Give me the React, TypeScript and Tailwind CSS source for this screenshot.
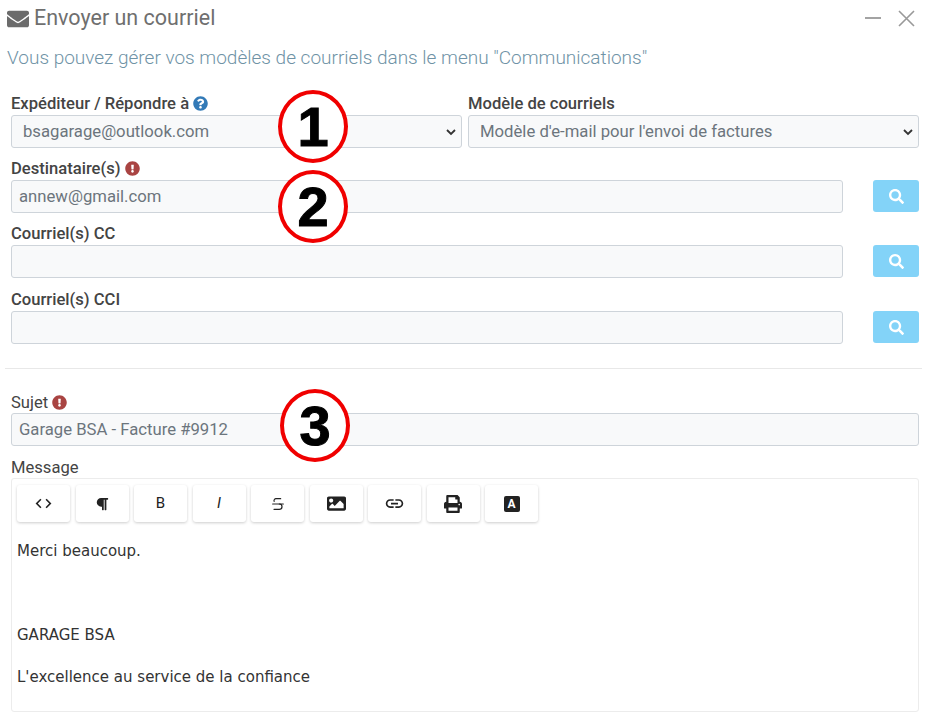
import React from "react";
import { FaEnvelope, FaQuestionCircle, FaExclamationCircle, FaSearch, FaParagraph, FaImage, FaPrint } from "react-icons/fa";
import { MdCode, MdLink } from "react-icons/md";
import { Strikethrough } from "lucide-react";

const inputCls = "block w-full h-[33px] border border-[#ced4da] rounded-[3px] bg-[#f8f9fa] px-[7px] text-[16.7px] text-[#6c757d] outline-none";

function Search() {
  return (
    <button className="w-[46px] h-[32px] rounded-[3px] bg-[#83d3f8] flex items-center justify-center text-white shrink-0">
      <FaSearch className="text-[15px]" />
    </button>
  );
}

function Label({ children, regular }: { children: React.ReactNode; regular?: boolean }) {
  return (
    <div className={"h-[19px] leading-[19px] text-[16.6px] text-[#444] flex items-center gap-[4px] " + (regular ? "font-normal" : "font-medium")}>
      {children}
    </div>
  );
}

function Select({ value }: { value: string }) {
  return (
    <div className="relative">
      <select className={inputCls + " appearance-none pl-[11px]"}>
        <option>{value}</option>
      </select>
      <svg width="10" height="7" viewBox="0 0 10 7" fill="none" stroke="#333" strokeWidth="1.8" className="absolute right-[6px] top-[14px]">
        <path d="M1 1L5 5L9 1" />
      </svg>
    </div>
  );
}

function InputRow({ label, value, icon, gapClass }: { label: string; value: string; icon?: boolean; gapClass: string }) {
  return (
    <div className={gapClass}>
      <div className="pb-[2px]">
        <Label>
          {label}
          {icon && <FaExclamationCircle className="text-[#a94442] text-[15px]" />}
        </Label>
      </div>
      <div className="flex gap-[30px]">
        <input readOnly value={value} className={inputCls + " flex-1 min-w-0"} />
        <Search />
      </div>
    </div>
  );
}

function Mark({ n, className }: { n: string; className: string }) {
  return (
    <div
      className={"absolute w-[70px] h-[73px] rounded-[50%] border-[4px] border-[#f00000] bg-white flex items-center justify-center text-black text-[56px] font-bold [-webkit-text-stroke:1px_black] " + className}
      style={{ fontFamily: '"Liberation Sans", sans-serif' }}
    >
      {n}
    </div>
  );
}

function TB({ children }: { children: React.ReactNode }) {
  return (
    <div className="w-[53px] h-[37px] bg-white rounded-[3px] shadow-[0_1px_3px_rgba(0,0,0,0.2)] flex items-center justify-center text-[#222]">
      {children}
    </div>
  );
}

export default function App() {
  return (
    <div className="relative w-[927px] h-[717px] overflow-hidden bg-white" style={{ fontFamily: "Roboto, sans-serif" }}>
      <div className="flex items-center h-[36px] pl-[7px] pr-[12px]">
        <FaEnvelope className="text-[#6b6b6b] text-[22px] mr-[5px] mt-[1px]" />
        <div className="text-[21.5px] text-[#6f6f6f] flex-1">Envoyer un courriel</div>
        <svg width="16" height="2" className="mr-[17px]"><rect width="16" height="2" fill="#a3a3a3" /></svg>
        <svg width="17" height="17" viewBox="0 0 17 17" stroke="#999" strokeWidth="1.6"><path d="M1 1L16 16M16 1L1 16" /></svg>
      </div>
      <div className="pl-[7px] mt-[10px] text-[19px] leading-[24px] font-light text-[#6f93a6]">Vous pouvez gérer vos modèles de courriels dans le menu "Communications"</div>

      <div className="ml-[11px] mr-[8px] mt-[24px]">
        <div className="grid grid-cols-[451px_451px] gap-[6px]">
          <div>
            <div className="pb-[2px]">
              <Label>
                Expéditeur / Répondre à
                <FaQuestionCircle className="text-[#337ab7] text-[15px]" />
              </Label>
            </div>
            <Select value="bsagarage@outlook.com" />
          </div>
          <div>
            <div className="pb-[2px]">
              <Label>Modèle de courriels</Label>
            </div>
            <Select value="Modèle d'e-mail pour l'envoi de factures" />
          </div>
        </div>
        <InputRow label="Destinataire(s)" value="annew@gmail.com" icon gapClass="mt-[11px]" />
        <InputRow label="Courriel(s) CC" value="" gapClass="mt-[11px]" />
        <InputRow label="Courriel(s) CCI" value="" gapClass="mt-[12px]" />
      </div>

      <div className="mx-[5px] mt-[24px] border-t border-[#e8e8e8]" />

      <div className="ml-[11px] mr-[8px] mt-[24px]">
        <div className="pb-[1px]">
          <Label regular>
            Sujet
            <FaExclamationCircle className="text-[#a94442] text-[15px]" />
          </Label>
        </div>
        <input readOnly value="Garage BSA - Facture #9912" className={inputCls} />
        <div className="mt-[12px] mb-[1px]"><Label regular>Message</Label></div>
        <div className="h-[234px] border border-[#ececec] rounded-[3px] px-[5px] pt-[6px]">
          <div className="flex gap-[5.5px]">
            <TB><MdCode className="text-[19px]" /></TB>
            <TB><FaParagraph className="text-[14px]" /></TB>
            <TB><span className="text-[15px]">B</span></TB>
            <TB><span className="text-[15px] italic">I</span></TB>
            <TB><Strikethrough size={16} strokeWidth={1.8} /></TB>
            <TB><FaImage className="text-[19px]" /></TB>
            <TB><MdLink className="text-[21px]" /></TB>
            <TB><FaPrint className="text-[18px]" /></TB>
            <TB>
              <span className="w-[16px] h-[16px] rounded-[2px] bg-[#222] text-white text-[12px] font-bold flex items-center justify-center">A</span>
            </TB>
          </div>
          <div className="mt-[19px] text-[15px] leading-[21px] text-[#333]" style={{ fontFamily: '"DejaVu Sans", sans-serif' }}>
            <p>Merci beaucoup.</p>
            <p className="mt-[63px]">GARAGE BSA</p>
            <p className="mt-[21px]">L'excellence au service de la confiance</p>
          </div>
        </div>
      </div>

      <Mark n="1" className="left-[278px] top-[90px]" />
      <Mark n="2" className="left-[278px] top-[170px]" />
      <Mark n="3" className="left-[280px] top-[389px]" />
    </div>
  );
}
